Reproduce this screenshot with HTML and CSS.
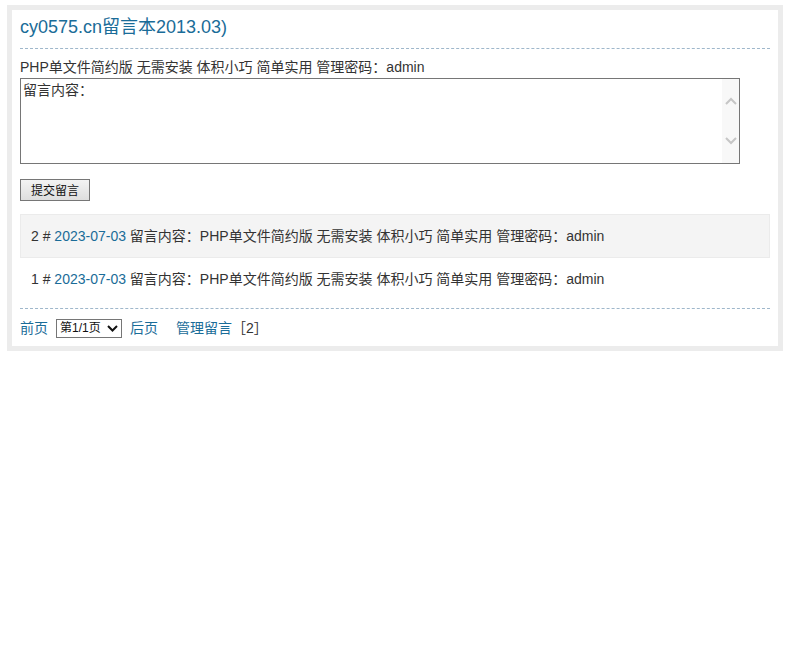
FILE: index.html
```html
<!DOCTYPE html>
<html lang="zh-CN">
<head>
<meta charset="utf-8">
<title>cy0575.cn留言本</title>
<link rel="stylesheet" href="styles.css">
</head>
<body>
<div class="wrap">
  <h1 class="title">cy0575.cn留言本2013.03)</h1>
  <p class="intro">PHP单文件简约版 无需安装 体积小巧 简单实用 管理密码：admin</p>
  <form class="form">
    <div class="editor">
      <textarea class="content">留言内容：</textarea>
      <div class="scrollbar">
        <svg class="arrow" width="12" height="8" viewBox="0 0 12 8"><polyline points="1,7 6,2 11,7" fill="none" stroke="#c6c6c6" stroke-width="2"/></svg>
        <svg class="arrow" width="12" height="8" viewBox="0 0 12 8"><polyline points="1,1 6,6 11,1" fill="none" stroke="#c6c6c6" stroke-width="2"/></svg>
      </div>
    </div>
    <button type="button" class="submit">提交留言</button>
  </form>
  <ul class="list">
    <li class="item alt">2 # <a class="date" href="#">2023-07-03</a> 留言内容：PHP单文件简约版 无需安装 体积小巧 简单实用 管理密码：admin</li>
    <li class="item">1 # <a class="date" href="#">2023-07-03</a> 留言内容：PHP单文件简约版 无需安装 体积小巧 简单实用 管理密码：admin</li>
  </ul>
  <div class="pager">
    <a href="#" class="link">前页</a>
    <span class="select-box">
      <select class="page"><option>第1/1页</option></select>
      <svg class="chev" width="11" height="7" viewBox="0 0 11 7"><polyline points="1,1 5.5,5.5 10,1" fill="none" stroke="#111" stroke-width="2"/></svg>
    </span>
    <a href="#" class="link">后页</a>
    <a href="#" class="link admin">管理留言</a><span class="count">［2］</span>
  </div>
</div>
</body>
</html>
```
FILE: styles.css
```css
html, body {
  margin: 0;
  padding: 0;
  background: #fff;
}
body {
  font-family: "Liberation Sans", Arial, "Noto Sans CJK SC", sans-serif;
  font-size: 14px;
  color: #333;
}
.wrap {
  margin: 5px 5px 0 7px;
  border: 5px solid #ececec;
  padding: 0 8px 8px;
}
.title {
  margin: 0;
  padding: 6px 0 10px;
  font-size: 18px;
  line-height: 22px;
  font-weight: normal;
  color: #1a6c98;
  border-bottom: 1px dashed #9fb7cb;
}
.intro {
  margin: 0;
  padding-top: 8px;
  line-height: 20px;
}
.form {
  margin: 1px 0 0;
}
.editor {
  display: flex;
  box-sizing: border-box;
  width: 720px;
  height: 86px;
  border: 1px solid #767676;
  background: #fff;
}
.content {
  flex: 1;
  display: block;
  margin: 0;
  padding: 2px 2px 2px 2px;
  border: none;
  outline: none;
  font-family: "Liberation Sans", Arial, "Noto Sans CJK SC", sans-serif;
  font-size: 14px;
  line-height: 18px;
  color: #333;
  overflow: hidden;
  resize: none;
}
.scrollbar {
  width: 17px;
  background: #f8f8f8;
  display: flex;
  flex-direction: column;
  align-items: center;
  padding: 18px 0 18px;
  justify-content: space-between;
}
.arrow {
  display: block;
}
.submit {
  display: block;
  box-sizing: border-box;
  margin-top: 15px;
  width: 70px;
  height: 22px;
  padding: 0;
  border: 1px solid #767676;
  background: linear-gradient(#f3f3f3, #dedede);
  font-family: "Noto Sans CJK SC", sans-serif;
  font-size: 12px;
  line-height: 18px;
  color: #111;
}
.list {
  list-style: none;
  margin: 13px 0 0;
  padding: 0 0 6px;
  border-bottom: 1px dashed #9fb7cb;
}
.item {
  padding: 11px 10px;
  line-height: 20px;
  border: 1px solid transparent;
}
.item.alt {
  background: #f4f4f4;
  border-color: #ebebeb;
}
.item + .item {
  padding-top: 10px;
  padding-bottom: 12px;
}
.date, .link {
  color: #1a6c98;
  text-decoration: none;
}
.pager {
  display: flex;
  align-items: center;
  padding-top: 9px;
  line-height: 20px;
}
.select-box {
  position: relative;
  display: block;
  margin: 0 8px;
  height: 19px;
}
.page {
  display: block;
  box-sizing: border-box;
  width: 66px;
  height: 19px;
  margin: 0;
  padding: 0 0 0 3px;
  border: 1px solid #767676;
  border-radius: 0;
  background: #fff;
  -webkit-appearance: none;
  appearance: none;
  font-family: "Liberation Sans", Arial, "Noto Sans CJK SC", sans-serif;
  font-size: 12px;
  line-height: 17px;
  color: #111;
}
.chev {
  position: absolute;
  left: 51px;
  top: 6px;
  pointer-events: none;
}
.admin {
  margin-left: 18px;
}
.count {
  color: #333;
}
```
